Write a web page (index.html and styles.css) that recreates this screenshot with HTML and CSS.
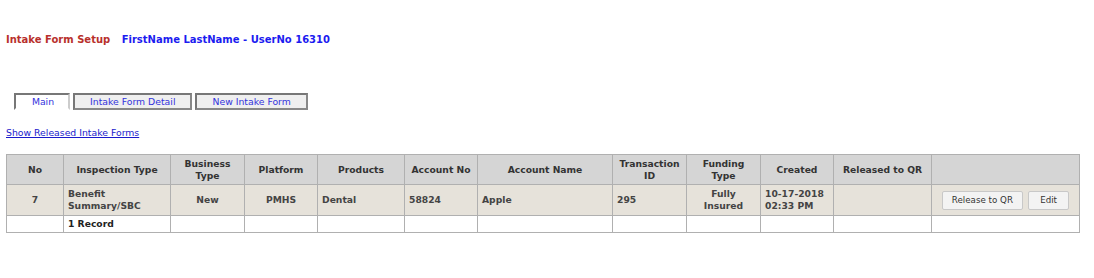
FILE: index.html
```html
<!DOCTYPE html>
<html lang="en">
<head>
    <meta charset="UTF-8">
    <title>Intake Form Setup</title>
    <link rel="stylesheet" href="styles.css">
</head>
<body>
    <div class="page-title">
        <span class="title-red">Intake Form Setup</span>
        <span class="title-blue">FirstName LastName - UserNo 16310</span>
    </div>

    <div class="tabs">
        <span class="tab tab-active">Main</span>
        <span class="tab">Intake Form Detail</span>
        <span class="tab">New Intake Form</span>
    </div>

    <a class="released-link" href="#">Show Released Intake Forms</a>

    <table class="grid">
        <colgroup>
            <col style="width:57px">
            <col style="width:107px">
            <col style="width:74px">
            <col style="width:73px">
            <col style="width:87px">
            <col style="width:73px">
            <col style="width:135px">
            <col style="width:74px">
            <col style="width:74px">
            <col style="width:73px">
            <col style="width:98px">
            <col style="width:148px">
        </colgroup>
        <tr class="head-row">
            <th>No</th>
            <th>Inspection Type</th>
            <th>Business<br>Type</th>
            <th>Platform</th>
            <th>Products</th>
            <th>Account No</th>
            <th>Account Name</th>
            <th>Transaction<br>ID</th>
            <th>Funding<br>Type</th>
            <th>Created</th>
            <th>Released to QR</th>
            <th></th>
        </tr>
        <tr class="data-row">
            <td class="center">7</td>
            <td>Benefit<br>Summary/SBC</td>
            <td class="center">New</td>
            <td class="center">PMHS</td>
            <td>Dental</td>
            <td>58824</td>
            <td>Apple</td>
            <td>295</td>
            <td class="center">Fully<br>Insured</td>
            <td>10-17-2018<br>02:33 PM</td>
            <td></td>
            <td class="center">
                <button class="grid-btn">Release to QR</button>
                <button class="grid-btn btn-edit">Edit</button>
            </td>
        </tr>
        <tr class="foot-row">
            <td></td>
            <td>1 Record</td>
            <td></td>
            <td></td>
            <td></td>
            <td></td>
            <td></td>
            <td></td>
            <td></td>
            <td></td>
            <td></td>
            <td></td>
        </tr>
    </table>
</body>
</html>
```

FILE: styles.css
```css
body {
    margin: 0;
    padding: 0 6px;
    font-family: "DejaVu Sans", Verdana, sans-serif;
    background-color: #fff;
    color: #000;
}
.page-title {
    padding-top: 34px;
    font-size: 10px;
    font-weight: bold;
    height: 13px;
}
.title-red {
    color: #b8302c;
    margin-right: 8px;
}
.title-blue {
    color: #1c1cf0;
}
.tabs {
    margin-top: 46px;
    padding-left: 8px;
    display: flex;
    gap: 3px;
    height: 17px;
}
.tab {
    display: flex;
    align-items: center;
    justify-content: center;
    font-size: 9.3px;
    color: #3333dd;
    background-color: #efefef;
    border: 2px solid #888;
    border-top-color: #777;
    border-left-color: #777;
    padding: 0 15px;
    height: 13px;
}
.tab-active {
    background-color: #fff;
    border-right-color: #ccc;
    border-bottom-color: #fff;
    padding: 0 13px 0 15px;
    width: 24px;
}
.released-link {
    display: block;
    margin-top: 17px;
    font-size: 9.3px;
    color: #1a1acc;
    text-decoration: underline;
}
.grid {
    margin-top: 16px;
    border-collapse: collapse;
    table-layout: fixed;
    width: 1073px;
    font-size: 9.2px;
    font-weight: bold;
    border: 1px solid #b0b0b0;
}
.grid th,
.grid td {
    border: 1px solid #b0b0b0;
    padding: 0 4px;
    line-height: 12px;
}
.grid th {
    background-color: #d5d5d5;
    color: #333;
    height: 29px;
    text-align: center;
}
.data-row td {
    background-color: #e6e2da;
    color: #444;
    height: 30px;
}
.foot-row td {
    height: 16px;
    color: #222;
}
.center {
    text-align: center;
}
.grid-btn {
    font-family: "DejaVu Sans", Verdana, sans-serif;
    font-size: 8.7px;
    color: #333;
    background-color: #f3f3f3;
    border: 1px solid #c8c8c8;
    border-radius: 2px;
    height: 19px;
    padding: 0 9px;
    margin: 0 1px;
}
.btn-edit {
    width: 41px;
}
```
